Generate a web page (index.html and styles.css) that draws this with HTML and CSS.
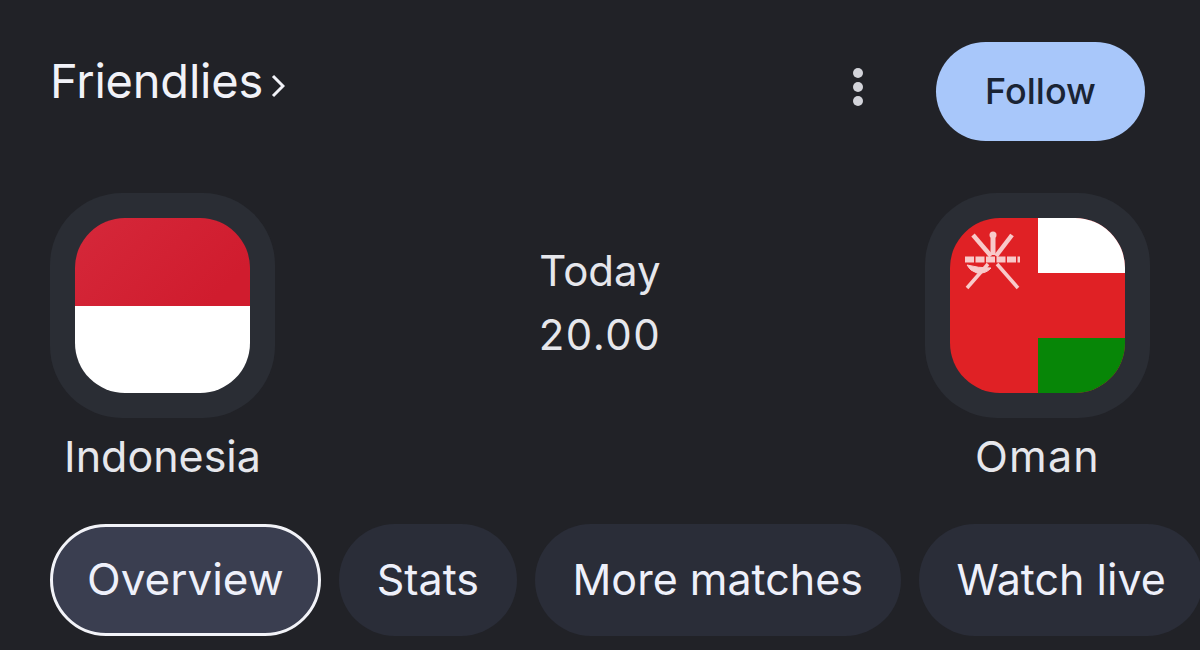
FILE: index.html
```html
<!DOCTYPE html>
<html lang="en">
<head>
    <meta charset="UTF-8">
    <meta name="viewport" content="width=device-width, initial-scale=1.0">
    <title>Indonesia vs Oman</title>
    <link rel="stylesheet" href="styles.css">
</head>
<body>

<div class="card">
    <!-- top row -->
    <div class="top-row">
        <div class="league">
            <span class="league-name">Friendlies</span>
            <svg class="chevron" width="14" height="24" viewBox="0 0 14 24">
                <path d="M2 2 L12 12 L2 22" fill="none" stroke="#f1f2f8" stroke-width="3"/>
            </svg>
        </div>
        <div class="dots">
            <span class="dot"></span>
            <span class="dot"></span>
            <span class="dot"></span>
        </div>
        <button class="follow-btn">Follow</button>
    </div>

    <!-- teams and time -->
    <div class="match-row">
        <div class="team">
            <div class="flag-box">
                <svg class="flag" viewBox="0 0 175 175">
                    <defs>
                        <linearGradient id="idRed" x1="0" y1="0" x2="1" y2="0.5">
                            <stop offset="0" stop-color="#d5283a"/>
                            <stop offset="1" stop-color="#d01c2e"/>
                        </linearGradient>
                    </defs>
                    <rect width="175" height="88" fill="url(#idRed)"/>
                    <rect y="88" width="175" height="87" fill="#ffffff"/>
                </svg>
            </div>
            <div class="team-name">Indonesia</div>
        </div>
        <div class="match-time">
            <div>Today</div>
            <div class="clock">20.00</div>
        </div>
        <div class="team">
            <div class="flag-box">
                <svg class="flag" viewBox="0 0 175 175">
                    <defs>
                        <filter id="soft" x="-10%" y="-10%" width="120%" height="120%">
                            <feGaussianBlur stdDeviation="0.6"/>
                        </filter>
                    </defs>
                    <rect width="175" height="175" fill="#e02125"/>
                    <rect x="88" width="87" height="55" fill="#ffffff"/>
                    <rect x="88" y="120" width="87" height="55" fill="#078607"/>
                    <!-- emblem -->
                    <g fill="none" stroke="#f8caca" filter="url(#soft)">
                        <path d="M23 17 L41 38" stroke-width="4.5"/>
                        <path d="M62 17 L46 38" stroke-width="4.5"/>
                        <path d="M47 46 L68 70" stroke-width="3.5"/>
                        <path d="M38 46 L17 70" stroke-width="3.5"/>
                        <path d="M15 41.5 H70" stroke-width="6" stroke-dasharray="9 1.5"/>
                        <path d="M43 20 V37" stroke-width="5"/>
                        <path d="M17 47 Q28 50 41 50 Q36 56 27 55 Q20 53 17 47 Z" fill="#f8caca" stroke-width="1"/>
                        <circle cx="43" cy="17" r="3.5" fill="#f8caca" stroke="none"/>
                    </g>
                </svg>
            </div>
            <div class="team-name team-name-wide">Oman</div>
        </div>
    </div>

    <!-- tabs -->
    <div class="tabs">
        <div class="tab tab-active">Overview</div>
        <div class="tab">Stats</div>
        <div class="tab">More matches</div>
        <div class="tab">Watch live</div>
    </div>
</div>

</body>
</html>
```
FILE: styles.css
```css
/* page */
html, body {
    margin: 0;
    padding: 0;
    height: 100%;
    background-color: #212227;
}

.card {
    width: 1200px;
    height: 650px;
    overflow: hidden;
    font-family: Inter, "Liberation Sans", sans-serif;
    color: #f1f2f8;
    padding: 42px 0 0 50px;
    box-sizing: border-box;
}

/* top row */
.top-row {
    display: flex;
    align-items: flex-start;
    height: 99px;
    padding-right: 55px;
}

.league {
    display: flex;
    align-items: center;
    gap: 8px;
    height: 76px;
    flex: 1;
}

.league-name {
    font-size: 47px;
    font-weight: 400;
    letter-spacing: -0.2px;
}

.chevron {
    margin-top: 12px;
}

.dots {
    display: flex;
    flex-direction: column;
    gap: 4px;
    margin: 26px 73px 0 0;
}

.dot {
    width: 10px;
    height: 10px;
    border-radius: 50%;
    background-color: #d3d4da;
}

.follow-btn {
    width: 209px;
    height: 99px;
    border: none;
    border-radius: 50px;
    background-color: #a8c7fa;
    color: #1a2434;
    font-family: Inter, "Liberation Sans", sans-serif;
    font-size: 36px;
    font-weight: 500;
    padding: 0 0 2px;
}

/* teams */
.match-row {
    display: flex;
    justify-content: space-between;
    width: 1100px;
    margin-top: 52px;
}

.team {
    width: 225px;
    display: flex;
    flex-direction: column;
    align-items: center;
}

.flag-box {
    width: 225px;
    height: 225px;
    border-radius: 72px;
    background-color: #2a2d34;
    display: flex;
    justify-content: center;
    align-items: center;
}

.flag {
    display: block;
    width: 175px;
    height: 175px;
    border-radius: 50px;
}

.team-name {
    margin-top: 13px;
    font-size: 43px;
    line-height: 50px;
    color: #e6e7ec;
    white-space: nowrap;
}

.team-name-wide {
    letter-spacing: 1.2px;
}

.match-time {
    margin-top: 46px;
    font-size: 42px;
    line-height: 64px;
    text-align: center;
    color: #e6e7ec;
}

.clock {
    letter-spacing: 1.5px;
}

/* tabs */
.tabs {
    display: flex;
    gap: 18.5px;
    margin-top: 43px;
}

.tab {
    flex: none;
    box-sizing: border-box;
    height: 112px;
    padding: 0 37.5px;
    border-radius: 56px;
    background-color: #2a2d38;
    font-size: 43px;
    line-height: 110px;
    color: #eef0fa;
    white-space: nowrap;
}

.tab-active {
    background-color: #3a3e50;
    border: 3px solid #f2f3f8;
    font-size: 44px;
    line-height: 104px;
    padding: 0 34px;
}
```
